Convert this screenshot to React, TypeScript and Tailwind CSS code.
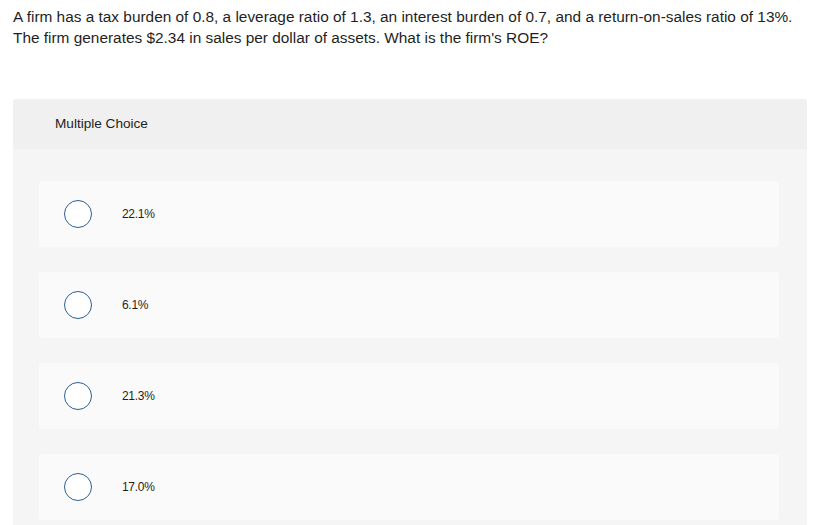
const choices = ["22.1%", "6.1%", "21.3%", "17.0%"];

export default function App() {
  return (
    <div className="h-[525px] overflow-hidden bg-white font-['Liberation_Sans',sans-serif] text-[#1f1f1f]">
      <p className="px-[13px] pt-[6px] text-[15.4px] leading-[21px]">
        A firm has a tax burden of 0.8, a leverage ratio of 1.3, an interest burden of 0.7, and a return-on-sales ratio of 13%.
        <br />
        The firm generates $2.34 in sales per dollar of assets. What is the firm's ROE?
      </p>
      <div className="mx-[13px] mt-[51px] w-[794px] rounded-t-[3px] bg-[#f5f5f5]">
        <div className="flex h-[50px] items-center rounded-t-[3px] bg-[#f0f0f0] px-[42px] text-[13.6px]">
          Multiple Choice
        </div>
        <div className="flex flex-col gap-[25px] pl-[26px] pr-[28px] pt-[32px] pb-[20px]">
          {choices.map((c) => (
            <div
              key={c}
              className="flex h-[66px] items-center rounded-[3px] bg-[#fafafa] pl-[25px]"
            >
              <span className="h-[28px] w-[28px] rounded-full border-[1.5px] border-[#2c5f91] bg-white" />
              <span className="ml-[30px] text-[12px] tracking-[-0.3px]">{c}</span>
            </div>
          ))}
        </div>
      </div>
    </div>
  );
}
